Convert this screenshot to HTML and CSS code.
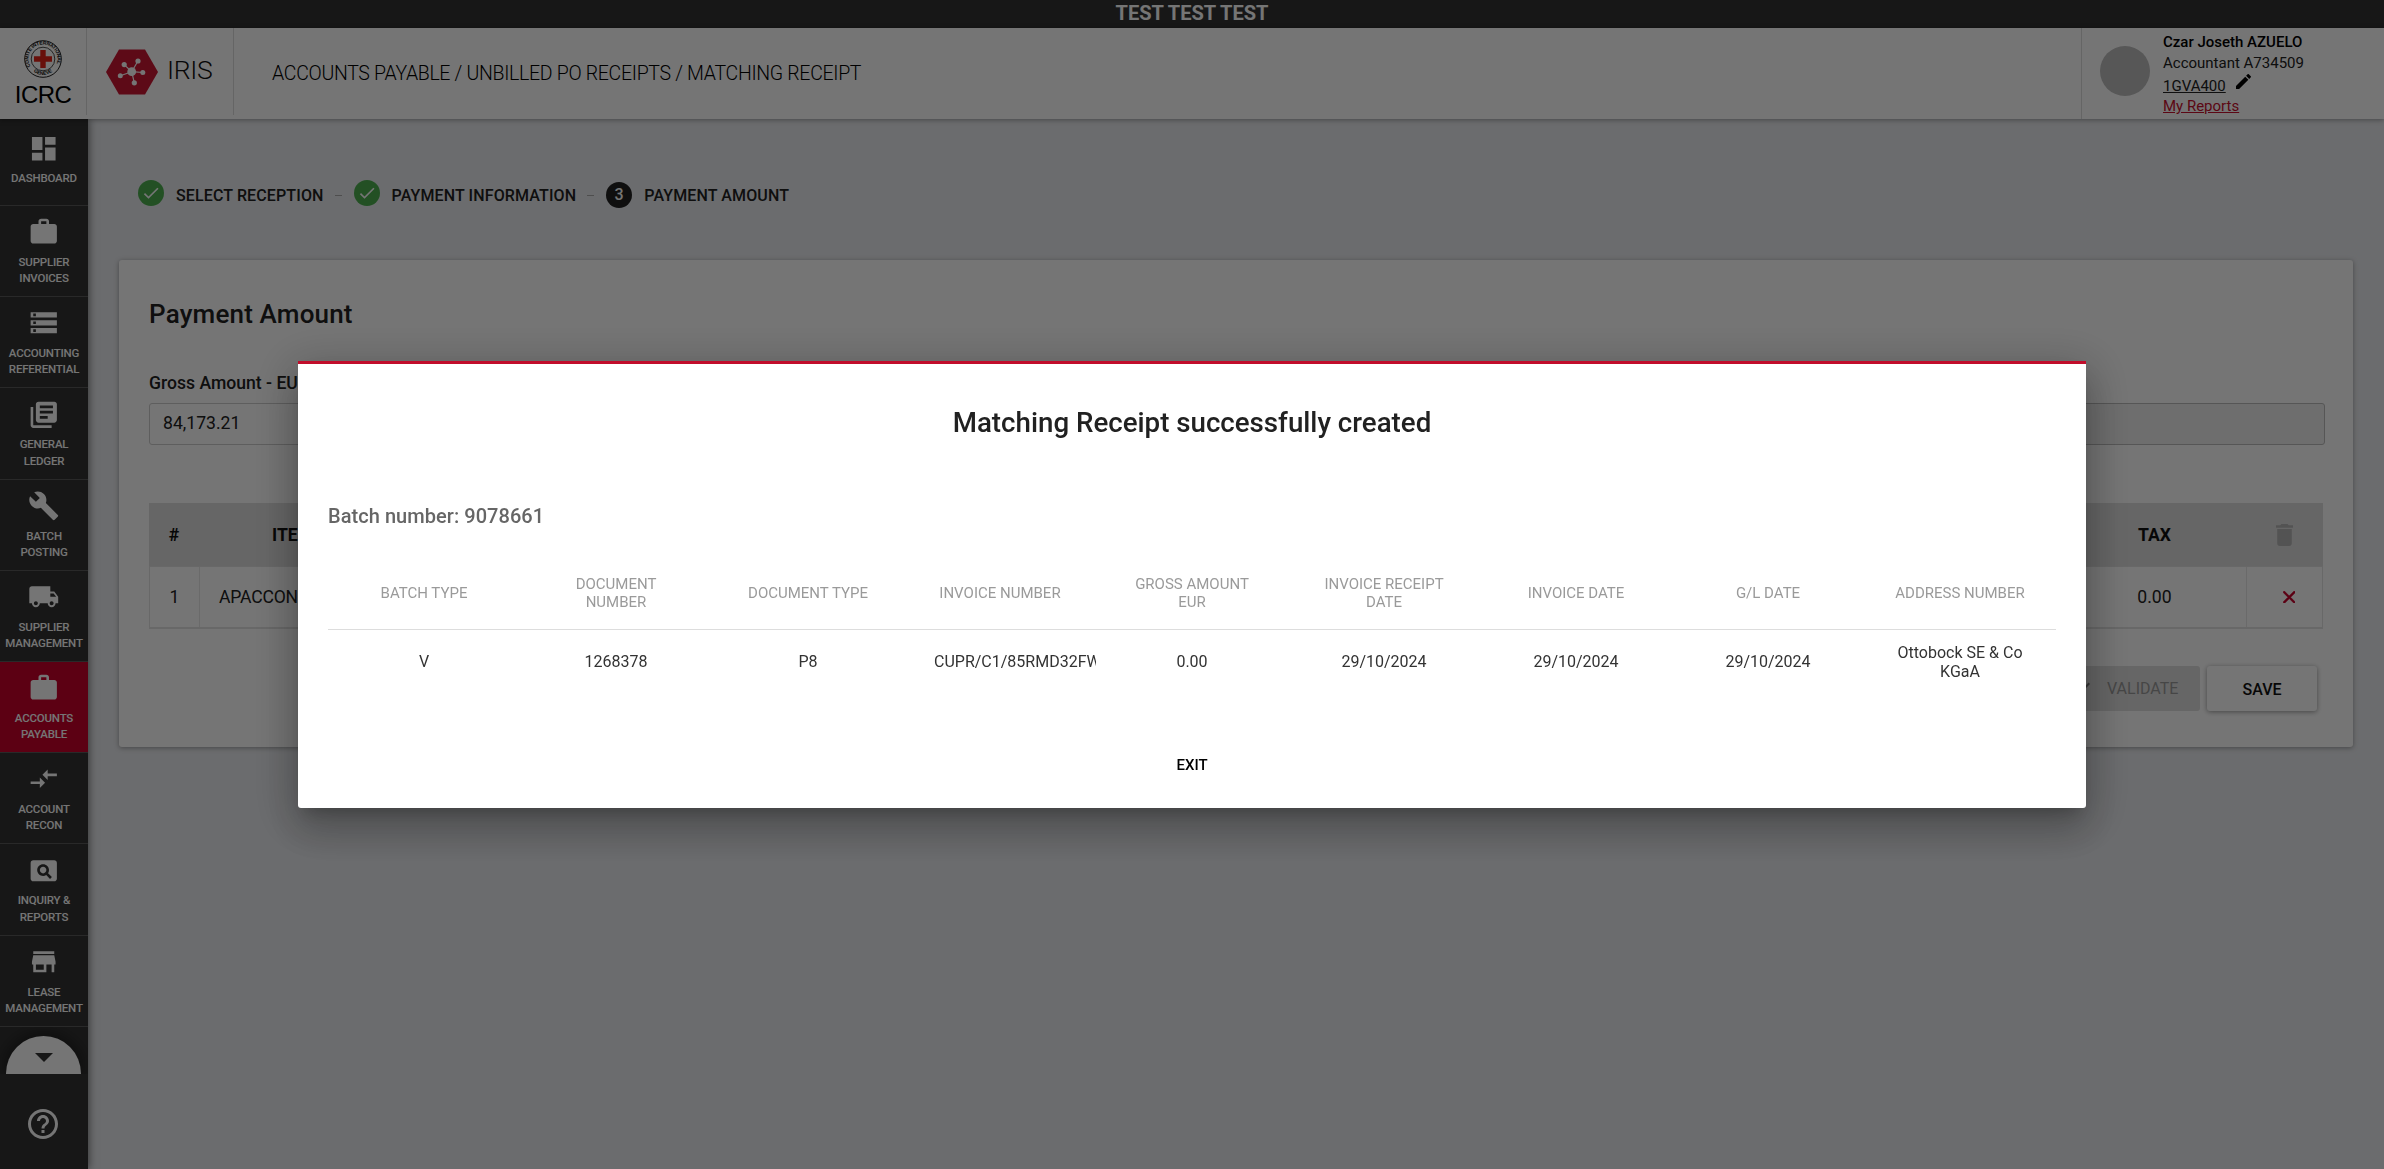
FILE: index.html
```html
<!DOCTYPE html>
<html lang="en">
<head>
<meta charset="utf-8">
<title>IRIS - Matching Receipt</title>
<link rel="stylesheet" href="styles.css">
</head>
<body>
<div class="app">
  <div class="env-banner">TEST TEST TEST</div>
  <header class="header">
    <div class="brand-icrc">
      <svg class="emblem" viewBox="0 0 38 38">
        <circle cx="19" cy="19" r="18.3" fill="#fff" stroke="#222" stroke-width="1"/>
        <circle cx="19" cy="19" r="11.8" fill="#fff" stroke="#222" stroke-width=".8"/>
        <defs>
          <path id="arc-top" d="M6.6 26.5A14.5 14.5 0 1 1 31.4 26.5"/>
          <path id="arc-bottom" d="M8 30.5A16 16 0 0 0 30 30.5"/>
        </defs>
        <text class="emblem-text"><textPath href="#arc-top" textLength="58">COMITE INTERNATIONAL</textPath></text>
        <text class="emblem-text"><textPath href="#arc-bottom" startOffset="2" textLength="20">GENEVE</textPath></text>
        <path d="M16.3 10h5.4v6.300h6.300v5.400h-6.300v6.300h-5.400v-6.300h-6.300v-5.400h6.300z" fill="#e2231a"/>
      </svg>
      <span class="icrc-name">ICRC</span>
    </div>
    <div class="brand-iris">
      <svg class="hex" viewBox="0 0 52 46">
        <path d="M13 .5h26L52 23 39 45.5H13L0 23z" fill="#cb1733"/>
        <path stroke="#fff" stroke-width="1.2" d="M25.700 22.700 18.200 15.600M25.700 22.700 32 12M25.700 22.700 36.800 23.500M25.700 22.700 14.300 26.800M25.700 22.700 28.300 33.800"/>
        <g fill="#fff"><circle cx="25.700" cy="22.700" r="4.400"/><circle cx="18.200" cy="15.600" r="2.600"/><circle cx="32" cy="12" r="2.600"/><circle cx="36.800" cy="23.500" r="2.500"/><circle cx="14.300" cy="26.800" r="2.500"/><circle cx="28.300" cy="33.800" r="2.600"/></g>
      </svg>
      <span class="iris-name">IRIS</span>
    </div>
    <div class="crumbs">ACCOUNTS PAYABLE / UNBILLED PO RECEIPTS / MATCHING RECEIPT</div>
    <div class="profile">
      <span class="avatar"></span>
      <div class="profile-text">
        <div class="user-name">Czar Joseth AZUELO</div>
        <div class="user-role">Accountant A734509</div>
        <div class="user-site"><a>1GVA400</a><svg class="pencil" viewBox="3 3 18 18"><path d="M3 17.25V21h3.75L17.81 9.94l-3.75-3.75L3 17.25zM20.71 7.04a1 1 0 0 0 0-1.41l-2.34-2.34a1 1 0 0 0-1.41 0l-1.83 1.83 3.75 3.75 1.83-1.83z"/></svg></div>
        <div class="user-reports"><a>My Reports</a></div>
      </div>
    </div>
  </header>
  <div class="body">
    <nav class="sidebar">
      <a class="nav-item first"><svg viewBox="0 0 24 24"><path d="M3 13h8V3H3v10zm0 8h8v-6H3v6zm10 0h8V11h-8v10zm0-18v6h8V3h-8z"/></svg><span>DASHBOARD</span></a>
      <a class="nav-item"><svg viewBox="0 0 24 24"><path d="M20 6h-4V4c0-1.11-.89-2-2-2h-4c-1.11 0-2 .89-2 2v2H4c-1.11 0-1.99.89-1.99 2L2 19c0 1.11.89 2 2 2h16c1.11 0 2-.89 2-2V8c0-1.11-.89-2-2-2zm-6 0h-4V4h4v2z"/></svg><span>SUPPLIER<br>INVOICES</span></a>
      <a class="nav-item"><svg viewBox="0 0 24 24"><path d="M2 20h20v-4H2v4zm2-3h2v2H4v-2zM2 4v4h20V4H2zm4 3H4V5h2v2zm-4 7h20v-4H2v4zm2-3h2v2H4v-2z"/></svg><span>ACCOUNTING<br>REFERENTIAL</span></a>
      <a class="nav-item"><svg viewBox="0 0 24 24"><path d="M4 6H2v14c0 1.1.9 2 2 2h14v-2H4V6zm16-4H8c-1.1 0-2 .9-2 2v12c0 1.1.9 2 2 2h12c1.1 0 2-.9 2-2V4c0-1.1-.9-2-2-2zm-1 9H9V9h10v2zm-4 4H9v-2h6v2zm4-8H9V5h10v2z"/></svg><span>GENERAL<br>LEDGER</span></a>
      <a class="nav-item"><svg viewBox="0 0 24 24"><path d="M22.7 19l-9.1-9.1c.9-2.3.4-5-1.5-6.9-2-2-5-2.4-7.4-1.3L9 6 6 9 1.6 4.7C.4 7.1.9 10.1 2.9 12.1c1.9 1.9 4.6 2.4 6.9 1.5l9.1 9.1c.4.4 1 .4 1.4 0l2.3-2.3c.5-.4.5-1.1.1-1.4z"/></svg><span>BATCH<br>POSTING</span></a>
      <a class="nav-item"><svg viewBox="0 0 24 24"><path d="M20 8h-3V4H3c-1.1 0-2 .9-2 2v11h2c0 1.66 1.34 3 3 3s3-1.34 3-3h6c0 1.66 1.34 3 3 3s3-1.34 3-3h2v-5l-3-4zM6 18.5c-.83 0-1.5-.67-1.5-1.5s.67-1.5 1.5-1.5 1.5.67 1.5 1.5-.67 1.5-1.5 1.5zm13.5-9l1.96 2.5H17V9.5h2.5zm-1.5 9c-.83 0-1.5-.67-1.5-1.5s.67-1.5 1.5-1.5 1.5.67 1.5 1.5-.67 1.5-1.5 1.5z"/></svg><span>SUPPLIER<br>MANAGEMENT</span></a>
      <a class="nav-item active"><svg viewBox="0 0 24 24"><path d="M20 6h-4V4c0-1.11-.89-2-2-2h-4c-1.11 0-2 .89-2 2v2H4c-1.11 0-1.99.89-1.99 2L2 19c0 1.11.89 2 2 2h16c1.11 0 2-.89 2-2V8c0-1.11-.89-2-2-2zm-6 0h-4V4h4v2z"/></svg><span>ACCOUNTS<br>PAYABLE</span></a>
      <a class="nav-item"><svg viewBox="0 0 24 24"><path d="M9.01 14H2v2h7.01v3L13 15l-3.99-4v3zm5.98-1v-3H22V8h-7.01V5L11 9l3.99 4z"/></svg><span>ACCOUNT<br>RECON</span></a>
      <a class="nav-item"><svg viewBox="0 0 24 24"><path d="M11.5 9C10.12 9 9 10.12 9 11.5s1.12 2.500 2.500 2.500 2.500-1.120 2.500-2.500S12.880 9 11.500 9zM20 4H4c-1.100 0-2 .9-2 2v12c0 1.100.9 2 2 2h16c1.100 0 2-.9 2-2V6c0-1.100-.9-2-2-2zm-3.210 14.210l-2.910-2.910c-.69.440-1.510.7-2.390.7C9.010 16 7 13.990 7 11.500S9.010 7 11.500 7 16 9.010 16 11.500c0 .88-.26 1.690-.7 2.390l2.910 2.900-1.420 1.420z"/></svg><span>INQUIRY &amp;<br>REPORTS</span></a>
      <a class="nav-item"><svg viewBox="0 0 24 24"><path d="M20 4H4v2h16V4zm1 10v-2l-1-5H4l-1 5v2h1v6h10v-6h4v6h2v-6h1zm-9 4H6v-4h6v4z"/></svg><span>LEASE<br>MANAGEMENT</span></a>
      <div class="more"><div class="more-dome"><svg viewBox="0 0 18 9"><path d="M0 0h18L9 9z"/></svg></div></div>
      <div class="help"><svg viewBox="2 2 20 20"><path d="M11 18h2v-2h-2v2zm1-16C6.480 2 2 6.480 2 12s4.480 10 10 10 10-4.480 10-10S17.520 2 12 2zm0 18c-4.410 0-8-3.590-8-8s3.590-8 8-8 8 3.590 8 8-3.590 8-8 8zm0-14c-2.210 0-4 1.790-4 4h2c0-1.100.9-2 2-2s2 .9 2 2c0 2-3 1.750-3 5h2c0-2.250 3-2.500 3-5 0-2.210-1.790-4-4-4z"/></svg></div>
    </nav>
    <main class="main">
      <ol class="steps">
        <li class="step"><span class="badge done"><svg viewBox="0 0 24 24"><path d="M9 16.170L4.830 12l-1.420 1.410L9 19 21 7l-1.410-1.410z"/></svg></span>SELECT RECEPTION</li>
        <li class="dash"></li>
        <li class="step"><span class="badge done"><svg viewBox="0 0 24 24"><path d="M9 16.170L4.830 12l-1.420 1.410L9 19 21 7l-1.410-1.410z"/></svg></span>PAYMENT INFORMATION</li>
        <li class="dash"></li>
        <li class="step"><span class="badge current">3</span>PAYMENT AMOUNT</li>
      </ol>
      <section class="card">
        <h2 class="card-title">Payment Amount</h2>
        <div class="fields">
          <div class="field"><label>Gross Amount - EU</label><div class="input">84,173.21</div></div>
          <div class="field"><label>&nbsp;</label><div class="input disabled"></div></div>
        </div>
        <div class="items">
          <div class="items-row items-head"><span>#</span><span class="item-head">ITE</span><span>TAX</span><span><svg class="trash" viewBox="5 3 14 18"><path d="M6 19c0 1.100.9 2 2 2h8c1.100 0 2-.9 2-2V7H6v12zM19 4h-3.500l-1-1h-5l-1 1H5v2h14V4z"/></svg></span></div>
          <div class="items-row items-body"><span>1</span><span class="item-name">APACCON</span><span>0.00</span><span class="remove"><svg class="cross" viewBox="5 5 14 14"><path d="M19 6.410L17.590 5 12 10.590 6.410 5 5 6.410 10.590 12 5 17.590 6.410 19 12 13.410 17.590 19 19 17.590 13.410 12z"/></svg></span></div>
        </div>
        <div class="actions">
          <button class="btn btn-disabled"><svg viewBox="0 0 24 24"><path d="M9 16.170L4.830 12l-1.420 1.410L9 19 21 7l-1.410-1.410z"/></svg>VALIDATE</button>
          <button class="btn">SAVE</button>
        </div>
      </section>
    </main>
  </div>
</div>
<div class="backdrop">
  <div class="dialog">
    <h1 class="dialog-title">Matching Receipt successfully created</h1>
    <p class="batch">Batch number: 9078661</p>
    <table class="result">
      <thead><tr><th>BATCH TYPE</th><th>DOCUMENT<br>NUMBER</th><th>DOCUMENT TYPE</th><th>INVOICE NUMBER</th><th>GROSS AMOUNT<br>EUR</th><th>INVOICE RECEIPT<br>DATE</th><th>INVOICE DATE</th><th>G/L DATE</th><th>ADDRESS NUMBER</th></tr></thead>
      <tbody><tr><td>V</td><td>1268378</td><td>P8</td><td><div class="clip">CUPR/C1/85RMD32FW</div></td><td>0.00</td><td>29/10/2024</td><td>29/10/2024</td><td>29/10/2024</td><td>Ottobock SE &amp; Co<br>KGaA</td></tr></tbody>
    </table>
    <button class="exit">EXIT</button>
  </div>
</div>
</body>
</html>
```
FILE: styles.css
```css
* { box-sizing: border-box; }
body { margin: 0; font-family: Roboto, "Liberation Sans", sans-serif; color: #212121; background: #e9ebef; }
.app { height: 1169px; display: flex; flex-direction: column; overflow: hidden; }
.env-banner { height: 28px; background: #323232; color: #fff; text-align: center; font-size: 20px; font-weight: 700; line-height: 27px; }
.header { height: 91px; background: #fff; display: flex; position: relative; z-index: 2; box-shadow: 0 1px 5px rgba(0,0,0,.35); }
.brand-icrc { width: 87px; height: 87px; border-right: 1px solid #dcdcdc; display: flex; flex-direction: column; align-items: center; padding-top: 12px; }
.emblem { width: 38px; height: 38px; }
.emblem-text { font: 700 5px "Liberation Sans", sans-serif; fill: #111; }
.icrc-name { font: 24px/28px "Liberation Sans", Arial, sans-serif; color: #000; margin-top: 3px; letter-spacing: -.6px; }
.brand-iris { width: 147px; height: 87px; border-right: 1px solid #dcdcdc; display: flex; align-items: flex-start; padding: 21px 0 0 19px; }
.hex { width: 52px; height: 46px; }
.iris-name { font-size: 26.5px; font-weight: 300; line-height: 32px; margin: 5px 0 0 9px; color: #111; letter-spacing: -.3px; }
.crumbs { flex: 1; padding-left: 38px; font-size: 19.5px; font-weight: 300; letter-spacing: -.31px; line-height: 92px; color: #000; white-space: nowrap; }
.profile { width: 303px; border-left: 1px solid #dcdcdc; display: flex; padding-left: 18px; }
.avatar { width: 50px; height: 50px; border-radius: 50%; background: #bdbdbd; margin: 18px 13px 0 0; }
.profile-text { font-size: 15px; line-height: 21px; padding-top: 4px; }
.user-name { font-weight: 500; color: #000; }
.user-site { display: flex; height: 22px; line-height: 24px; }
.user-site a, .user-reports a { text-decoration: underline; }
.user-reports { line-height: 20px; color: #c8102e; }
.pencil { width: 15px; height: 15px; margin: 0 0 0 10px; }
.body { flex: 1; display: flex; min-height: 0; }
.sidebar { width: 88px; background: #323232; display: flex; flex-direction: column; color: #fff; position: relative; z-index: 1; box-shadow: 1px 0 8px rgba(0,0,0,.5); }
.nav-item { height: 91.2px; flex: none; border-bottom: 1px solid #5a5a5a; display: flex; flex-direction: column; align-items: center; padding-top: 10.3px; font-size: 11.5px; letter-spacing: -.2px; font-weight: 500; line-height: 16.2px; text-align: center; }
.nav-item svg { width: 31.5px; height: 31.5px; fill: #fff; margin-bottom: 6.3px; }
.nav-item.first { height: 87px; padding-top: 14px; }
.nav-item.first svg { margin-bottom: 5.5px; }
.nav-item.active { background: #c8002b; }
.more { height: 47px; flex: none; display: flex; justify-content: center; align-items: flex-end; overflow: hidden; padding-right: 1px; }
.more-dome { width: 75px; height: 38px; background: #fff; border-radius: 38px 38px 0 0; display: flex; justify-content: center; padding-top: 17px; box-shadow: 0 0 20px rgba(0,0,0,.6); }
.more-dome svg { width: 18px; height: 9px; fill: #323232; }
.help { padding: 35.5px 0 0 27.5px; }
.help svg { width: 30px; height: 30px; fill: #fff; display: block; }
.main { flex: 1; padding: 61px 31px 0; }
.steps { list-style: none; margin: 0; padding: 0 0 0 19px; height: 80px; display: flex; font-size: 16px; font-weight: 500; line-height: 31px; letter-spacing: .13px; }
.step { display: flex; }
.badge { width: 26px; height: 26px; border-radius: 50%; margin-right: 12px; flex: none; }
.badge.done { background: #4caf50; }
.badge.done svg { width: 20px; height: 20px; margin: 3px; fill: #fff; display: block; }
.badge.current { background: #212121; color: #fff; text-align: center; line-height: 26px; margin-top: 2px; }
.dash { width: 7px; height: 1px; background: #aaa; margin: 15px 12px 0 11px; }
.card { height: 487px; background: #fff; border-radius: 3px; padding: 0 28px 0 30px; box-shadow: 0 1px 5px rgba(0,0,0,.35); overflow: hidden; }
.card-title { margin: 0; padding-top: 37px; font-size: 26px; font-weight: 500; line-height: 34px; letter-spacing: .18px; }
.fields { display: grid; grid-template-columns: 1fr 1fr; gap: 30px; margin-top: 40px; }
.field { line-height: 24px; }
.field label { font-size: 17.6px; font-weight: 500; display: block; margin-bottom: 8px; }
.input { height: 42px; border: 1px solid #ccc; border-radius: 3px; padding-left: 13px; font-size: 17.6px; line-height: 39px; }
.input.disabled { background: #f0f0f0; border-color: #bbb; }
.items { margin: 58px 2px 0 0; font-size: 17.6px; }
.items-row { display: grid; grid-template-columns: 50px 1fr 183px 77px; text-align: center; }
.items-row > span { display: flex; align-items: center; justify-content: center; }
.items-head { height: 63px; background: #dfdfdf; font-weight: 700; color: #111; }
.items-row > .item-head { justify-content: flex-start; padding-left: 73px; }
.items-body { height: 63px; border: 1px solid #e2e2e2; border-bottom-width: 2px; grid-template-columns: 49px 1fr 184px 76px; }
.items-body > span + span { border-left: 1px solid #e8e8e8; }
.items-body > .item-name { justify-content: flex-start; padding-left: 19px; letter-spacing: -.2px; }
.items-body > .item-name + span { border-left-color: transparent; }
.items-row > .remove { padding-left: 9px; }
.actions { display: flex; justify-content: flex-end; gap: 7px; padding: 37px 8px 0 0; }
.btn { font: 500 16px/47px Roboto, sans-serif; border: 0; height: 45px; width: 110px; padding: 0; background: #fff; color: #111; border-radius: 3px; box-shadow: 0 1px 5px rgba(0,0,0,.4); }
.btn-disabled { width: 150px; background: #dfdfdf; color: #999; font-weight: 400; box-shadow: none; display: flex; align-items: center; padding-left: 19px; }
.btn-disabled svg { width: 24px; height: 24px; fill: #777; margin-right: 14px; }
.trash { width: 17px; height: 22px; fill: #b5b5b5; }
.cross { width: 12.5px; height: 12.5px; fill: #c8002b; stroke: #c8002b; stroke-width: .8; }
.backdrop { position: fixed; inset: 0; z-index: 10; background: rgba(0,0,0,.54); }
.dialog { width: 1788px; height: 447px; margin: 361px auto 0; background: #fff; border-top: 3px solid #c10d2b; border-radius: 0 0 3px 3px; box-shadow: 0 11px 15px -7px rgba(0,0,0,.2), 0 24px 38px 3px rgba(0,0,0,.14), 0 9px 46px 8px rgba(0,0,0,.2); padding: 0 30px; display: flex; flex-direction: column; }
.dialog-title { margin: 41px 0 0; text-align: center; font-size: 27.7px; font-weight: 500; line-height: 36px; }
.batch { margin: 61px 0 0; font-size: 20px; font-weight: 500; line-height: 28px; letter-spacing: .05px; color: #666; }
.result { width: 100%; table-layout: fixed; border-collapse: collapse; text-align: center; margin-top: 26px; }
.result th { height: 73px; padding: 2px 0 0; font-size: 15px; font-weight: 400; line-height: 18px; color: #9a9a9a; border-bottom: 1px solid #ddd; }
.result td { height: 63px; padding: 2px 0 0; font-size: 16px; line-height: 19px; color: #333; }
.clip { margin-left: 30px; overflow: hidden; white-space: nowrap; text-align: left; }
.exit { align-self: center; margin-top: 61px; border: 0; background: none; padding: 0; font: 500 15px/24px Roboto, sans-serif; color: #000; }
```
